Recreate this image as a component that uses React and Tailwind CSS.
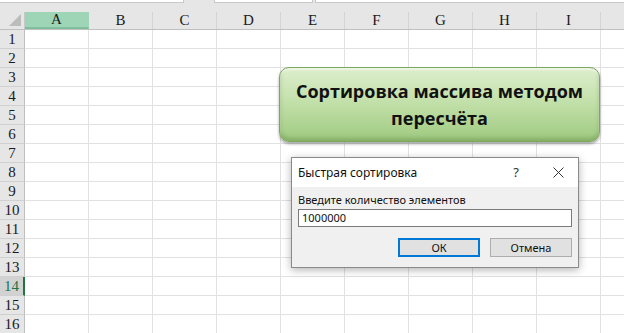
const COLS = ['A', 'B', 'C', 'D', 'E', 'F', 'G', 'H', 'I'];
const ROWS = Array.from({ length: 16 }, (_, i) => i + 1);

export default function App() {
  return (
    <div className="relative w-[624px] h-[333px] overflow-hidden bg-[#e6e6e6] font-['Liberation_Serif',serif]">
      {/* Formula bar edge */}
      <div className="flex h-[12px] items-start gap-[2px]">
        <div className="h-[3px] w-[184px] bg-white border-b border-r border-[#c8c8c8]" />
        <div className="h-[3px] w-[26px]" />
        <div className="h-[3px] w-[99px] bg-white border-b border-x border-[#c8c8c8]" />
        <div className="h-[3px] flex-1 bg-white border-b border-l border-[#c8c8c8]" />
      </div>

      {/* Column headers */}
      <div className="flex h-[18px] border-b border-[#bfbfbf]">
        <div className="relative w-[25px] shrink-0 border-r border-[#c8c8c8]">
          <svg className="absolute right-[3px] bottom-[3px]" width="12" height="12" viewBox="0 0 12 12">
            <polygon points="12,0 12,12 0,12" fill="#bcbcbc" />
          </svg>
        </div>
        {COLS.map((c) => (
          <div
            key={c}
            className={`w-[64px] shrink-0 flex items-center justify-center text-[15px] text-[#1a1a1a] border-r ${
              c === 'A' ? 'bg-[#9fd5b7] border-[#9fd5b7] border-b-2 border-b-[#7fbf9b]' : 'border-[#d4d4d4]'
            }`}
          >
            {c}
          </div>
        ))}
        <div className="flex-1" />
      </div>

      {/* Rows */}
      {ROWS.map((r) => (
        <div key={r} className="flex h-[19px]">
          <div
            className={`w-[25px] shrink-0 flex items-center justify-center text-[15px] border-b border-[#d0d0d0] ${
              r === 14
                ? 'bg-[#d2d2d2] text-[#217346] border-r-2 border-r-[#217346]'
                : 'text-[#1a1a1a] border-r border-r-[#bfbfbf]'
            }`}
          >
            {r}
          </div>
          {COLS.map((c) => (
            <div key={c} className="w-[64px] shrink-0 bg-white border-r border-b border-[#e1e1e1]" />
          ))}
          <div className="flex-1 bg-white border-b border-[#e1e1e1]" />
        </div>
      ))}

      {/* Green shape */}
      <div className="absolute left-[279px] top-[67px] w-[321px] h-[75px] rounded-[10px] border border-[#7ea760] bg-gradient-to-b from-[#ddeecd] via-[#c0dfa7] to-[#9fca80] shadow-[0_2px_3px_rgba(0,0,0,0.35),inset_0_-3px_4px_rgba(80,120,50,0.35),inset_0_2px_2px_rgba(255,255,255,0.6)] flex flex-col items-center justify-center font-['Open_Sans',sans-serif] font-bold text-[18px] leading-[27px] text-[#111]">
        <span>Сортировка массива методом</span>
        <span>пересчёта</span>
      </div>

      {/* Dialog */}
      <div className="absolute left-[291px] top-[157px] w-[288px] h-[111px] flex flex-col border border-[#8a8a8a] bg-[#f0f0f0] shadow-[0_2px_8px_rgba(0,0,0,0.3)] font-['Noto_Sans',sans-serif] text-[#111]">
        <div className="h-[29px] shrink-0 bg-white flex items-center pl-[6px] pr-[14px]">
          <span className="flex-1 text-[12px]">Быстрая сортировка</span>
          <span className="text-[13px] mr-[34px] text-[#333]">?</span>
          <svg width="11" height="11" viewBox="0 0 11 11">
            <path d="M0.5 0.5 L10.5 10.5 M10.5 0.5 L0.5 10.5" stroke="#333" strokeWidth="1" />
          </svg>
        </div>
        <div className="flex flex-col px-[6px] pt-[5px]">
          <div className="text-[11px] leading-[15px]">Введите количество элементов</div>
          <div className="mt-[2px] h-[18px] bg-white border border-[#7a7a7a] flex items-center pl-[3px] text-[11px]">
            1000000
          </div>
          <div className="mt-[11px] flex justify-end gap-[10px]">
            <button className="w-[82px] h-[19px] bg-[#e1e1e1] border border-[#0078d7] shadow-[inset_0_0_0_1px_#0078d7] text-[11px] leading-none">
              ОК
            </button>
            <button className="w-[82px] h-[19px] bg-[#e1e1e1] border border-[#adadad] text-[11px] leading-none">
              Отмена
            </button>
          </div>
        </div>
      </div>
    </div>
  );
}
